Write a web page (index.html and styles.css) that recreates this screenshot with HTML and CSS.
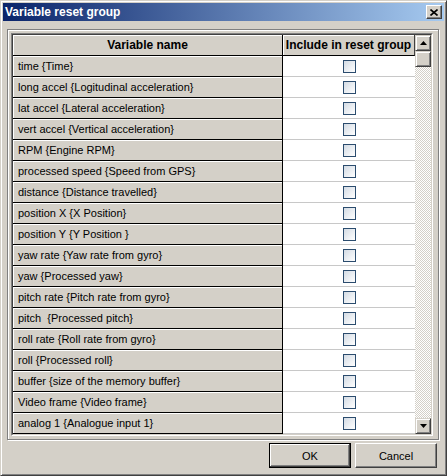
FILE: index.html
```html
<!DOCTYPE html>
<html lang="en">
  <head>
    <meta charset="UTF-8" />
    <title>Variable reset group</title>
    <link rel="stylesheet" href="styles.css">
  </head>
  <body>
    <div class="window">
      <div class="titlebar">
        <span class="title">Variable reset group</span>
        <button class="close-btn">
          <svg width="8" height="7" viewBox="0 0 8 7">
            <path d="M0.5 0.5 L7.5 6.5 M7.5 0.5 L0.5 6.5" stroke="#000" stroke-width="1.6" />
          </svg>
        </button>
      </div>

      <div class="body">
        <div class="panel">
          <div class="grid">
            <div class="grid-inner">
              <div class="cells">
                <div class="row head">
                  <div class="name">Variable name</div>
                  <div class="check">Include in reset group</div>
                </div>
                <div class="row"><div class="name">time {Time}</div><div class="check"><span class="box"></span></div></div>
                <div class="row"><div class="name">long accel {Logitudinal acceleration}</div><div class="check"><span class="box"></span></div></div>
                <div class="row"><div class="name">lat accel {Lateral acceleration}</div><div class="check"><span class="box"></span></div></div>
                <div class="row"><div class="name">vert accel {Vertical acceleration}</div><div class="check"><span class="box"></span></div></div>
                <div class="row"><div class="name">RPM {Engine RPM}</div><div class="check"><span class="box"></span></div></div>
                <div class="row"><div class="name">processed speed {Speed from GPS}</div><div class="check"><span class="box"></span></div></div>
                <div class="row"><div class="name">distance {Distance travelled}</div><div class="check"><span class="box"></span></div></div>
                <div class="row"><div class="name">position X {X Position}</div><div class="check"><span class="box"></span></div></div>
                <div class="row"><div class="name">position Y {Y Position }</div><div class="check"><span class="box"></span></div></div>
                <div class="row"><div class="name">yaw rate {Yaw rate from gyro}</div><div class="check"><span class="box"></span></div></div>
                <div class="row"><div class="name">yaw {Processed yaw}</div><div class="check"><span class="box"></span></div></div>
                <div class="row"><div class="name">pitch rate {Pitch rate from gyro}</div><div class="check"><span class="box"></span></div></div>
                <div class="row"><div class="name">pitch  {Processed pitch}</div><div class="check"><span class="box"></span></div></div>
                <div class="row"><div class="name">roll rate {Roll rate from gyro}</div><div class="check"><span class="box"></span></div></div>
                <div class="row"><div class="name">roll {Processed roll}</div><div class="check"><span class="box"></span></div></div>
                <div class="row"><div class="name">buffer {size of the memory buffer}</div><div class="check"><span class="box"></span></div></div>
                <div class="row"><div class="name">Video frame {Video frame}</div><div class="check"><span class="box"></span></div></div>
                <div class="row"><div class="name">analog 1 {Analogue input 1}</div><div class="check"><span class="box"></span></div></div>
              </div>

              <div class="scrollbar">
                <div class="sb-btn">
                  <svg width="7" height="4" viewBox="0 0 7 4"><polygon points="3.5,0 7,4 0,4" fill="#000" /></svg>
                </div>
                <div class="sb-thumb"></div>
                <div class="sb-track"></div>
                <div class="sb-btn">
                  <svg width="7" height="4" viewBox="0 0 7 4"><polygon points="0,0 7,0 3.5,4" fill="#000" /></svg>
                </div>
              </div>
            </div>
          </div>
        </div>

        <div class="buttons">
          <button class="btn default">OK</button>
          <button class="btn">Cancel</button>
        </div>
      </div>
    </div>
  </body>
</html>
```

FILE: styles.css
```css
* {
  box-sizing: border-box;
}

body {
  margin: 0;
  background: #d4d0c8;
  font-family: "Liberation Sans", Arial, sans-serif;
  font-size: 11px;
  color: #000;
}

.window {
  width: 447px;
  height: 476px;
  padding: 2px;
  background: #d4d0c8;
  border: 1px solid;
  border-color: #d4d0c8 #404040 #404040 #d4d0c8;
  box-shadow: inset 1px 1px #fff, inset -1px -1px #808080;
}

.titlebar {
  height: 18px;
  display: flex;
  align-items: center;
  justify-content: space-between;
  padding: 0 2px;
  background: linear-gradient(to right, #0a246a, #a6caf0);
}

.title {
  color: #fff;
  font-weight: bold;
  font-size: 12px;
}

.close-btn {
  width: 16px;
  height: 14px;
  padding: 0;
  display: flex;
  align-items: center;
  justify-content: center;
  background: #d4d0c8;
  border: 1px solid;
  border-color: #fff #404040 #404040 #fff;
  box-shadow: inset -1px -1px #808080, inset 1px 1px #d4d0c8;
}

.body {
  padding: 8px 5px 0 4px;
}

/* etched frame round the grid */
.panel {
  border: 1px solid #808080;
  box-shadow: 1px 1px #fff, inset 1px 1px #fff;
  padding: 3px 5px 3px 3px;
}

.grid {
  border: 1px solid;
  border-color: #808080 #fff #fff #808080;
}

.grid-inner {
  display: flex;
  border: 1px solid;
  border-color: #404040 #d4d0c8 #d4d0c8 #404040;
}

.cells {
  width: 402px;
}

.row {
  display: flex;
  height: 21px;
}

.name {
  width: 270px;
  padding-left: 5px;
  line-height: 20px;
  white-space: pre;
  background: #d4d0c8;
  border-right: 1px solid #000;
  border-bottom: 1px solid #000;
  box-shadow: inset 1px 1px #fff;
}

.check {
  flex: 1;
  display: flex;
  align-items: center;
  justify-content: center;
  background: #fff;
  border-bottom: 1px solid #c8c8c8;
}

.head .name,
.head .check {
  padding: 0;
  font-size: 12px;
  font-weight: bold;
  text-align: center;
  background: #d4d0c8;
  box-shadow: inset 1px 1px #fff;
  border-bottom: 1px solid #000;
}

.head .check {
  border-right: 1px solid #404040;
}

.box {
  width: 13px;
  height: 13px;
  border: 1px solid #2b4c6e;
  background: linear-gradient(135deg, #d3dbe4, #fff);
}

.scrollbar {
  width: 16px;
  display: flex;
  flex-direction: column;
}

.sb-btn,
.sb-thumb {
  height: 16px;
  flex: none;
  background: #d4d0c8;
  border: 1px solid;
  border-color: #d4d0c8 #404040 #404040 #d4d0c8;
  box-shadow: inset 1px 1px #fff, inset -1px -1px #808080;
}

.sb-btn {
  display: flex;
  align-items: center;
  justify-content: center;
}

.sb-track {
  flex: 1;
  background-image: repeating-conic-gradient(#fff 0 25%, #d4d0c8 0 50%);
  background-size: 2px 2px;
}

.buttons {
  display: flex;
  justify-content: flex-end;
  gap: 4px;
  padding: 3px 2px 0 0;
}

.btn {
  width: 82px;
  height: 25px;
  padding: 0;
  font-family: "Liberation Sans", Arial, sans-serif;
  font-size: 11px;
  color: #000;
  background: #d4d0c8;
  border: 1px solid;
  border-color: #fff #404040 #404040 #fff;
  box-shadow: inset -1px -1px #808080, inset 1px 1px #d4d0c8;
}

.btn.default {
  border-color: #000;
  box-shadow: inset -1px -1px #404040, inset 1px 1px #fff, inset -2px -2px #808080;
}
```
